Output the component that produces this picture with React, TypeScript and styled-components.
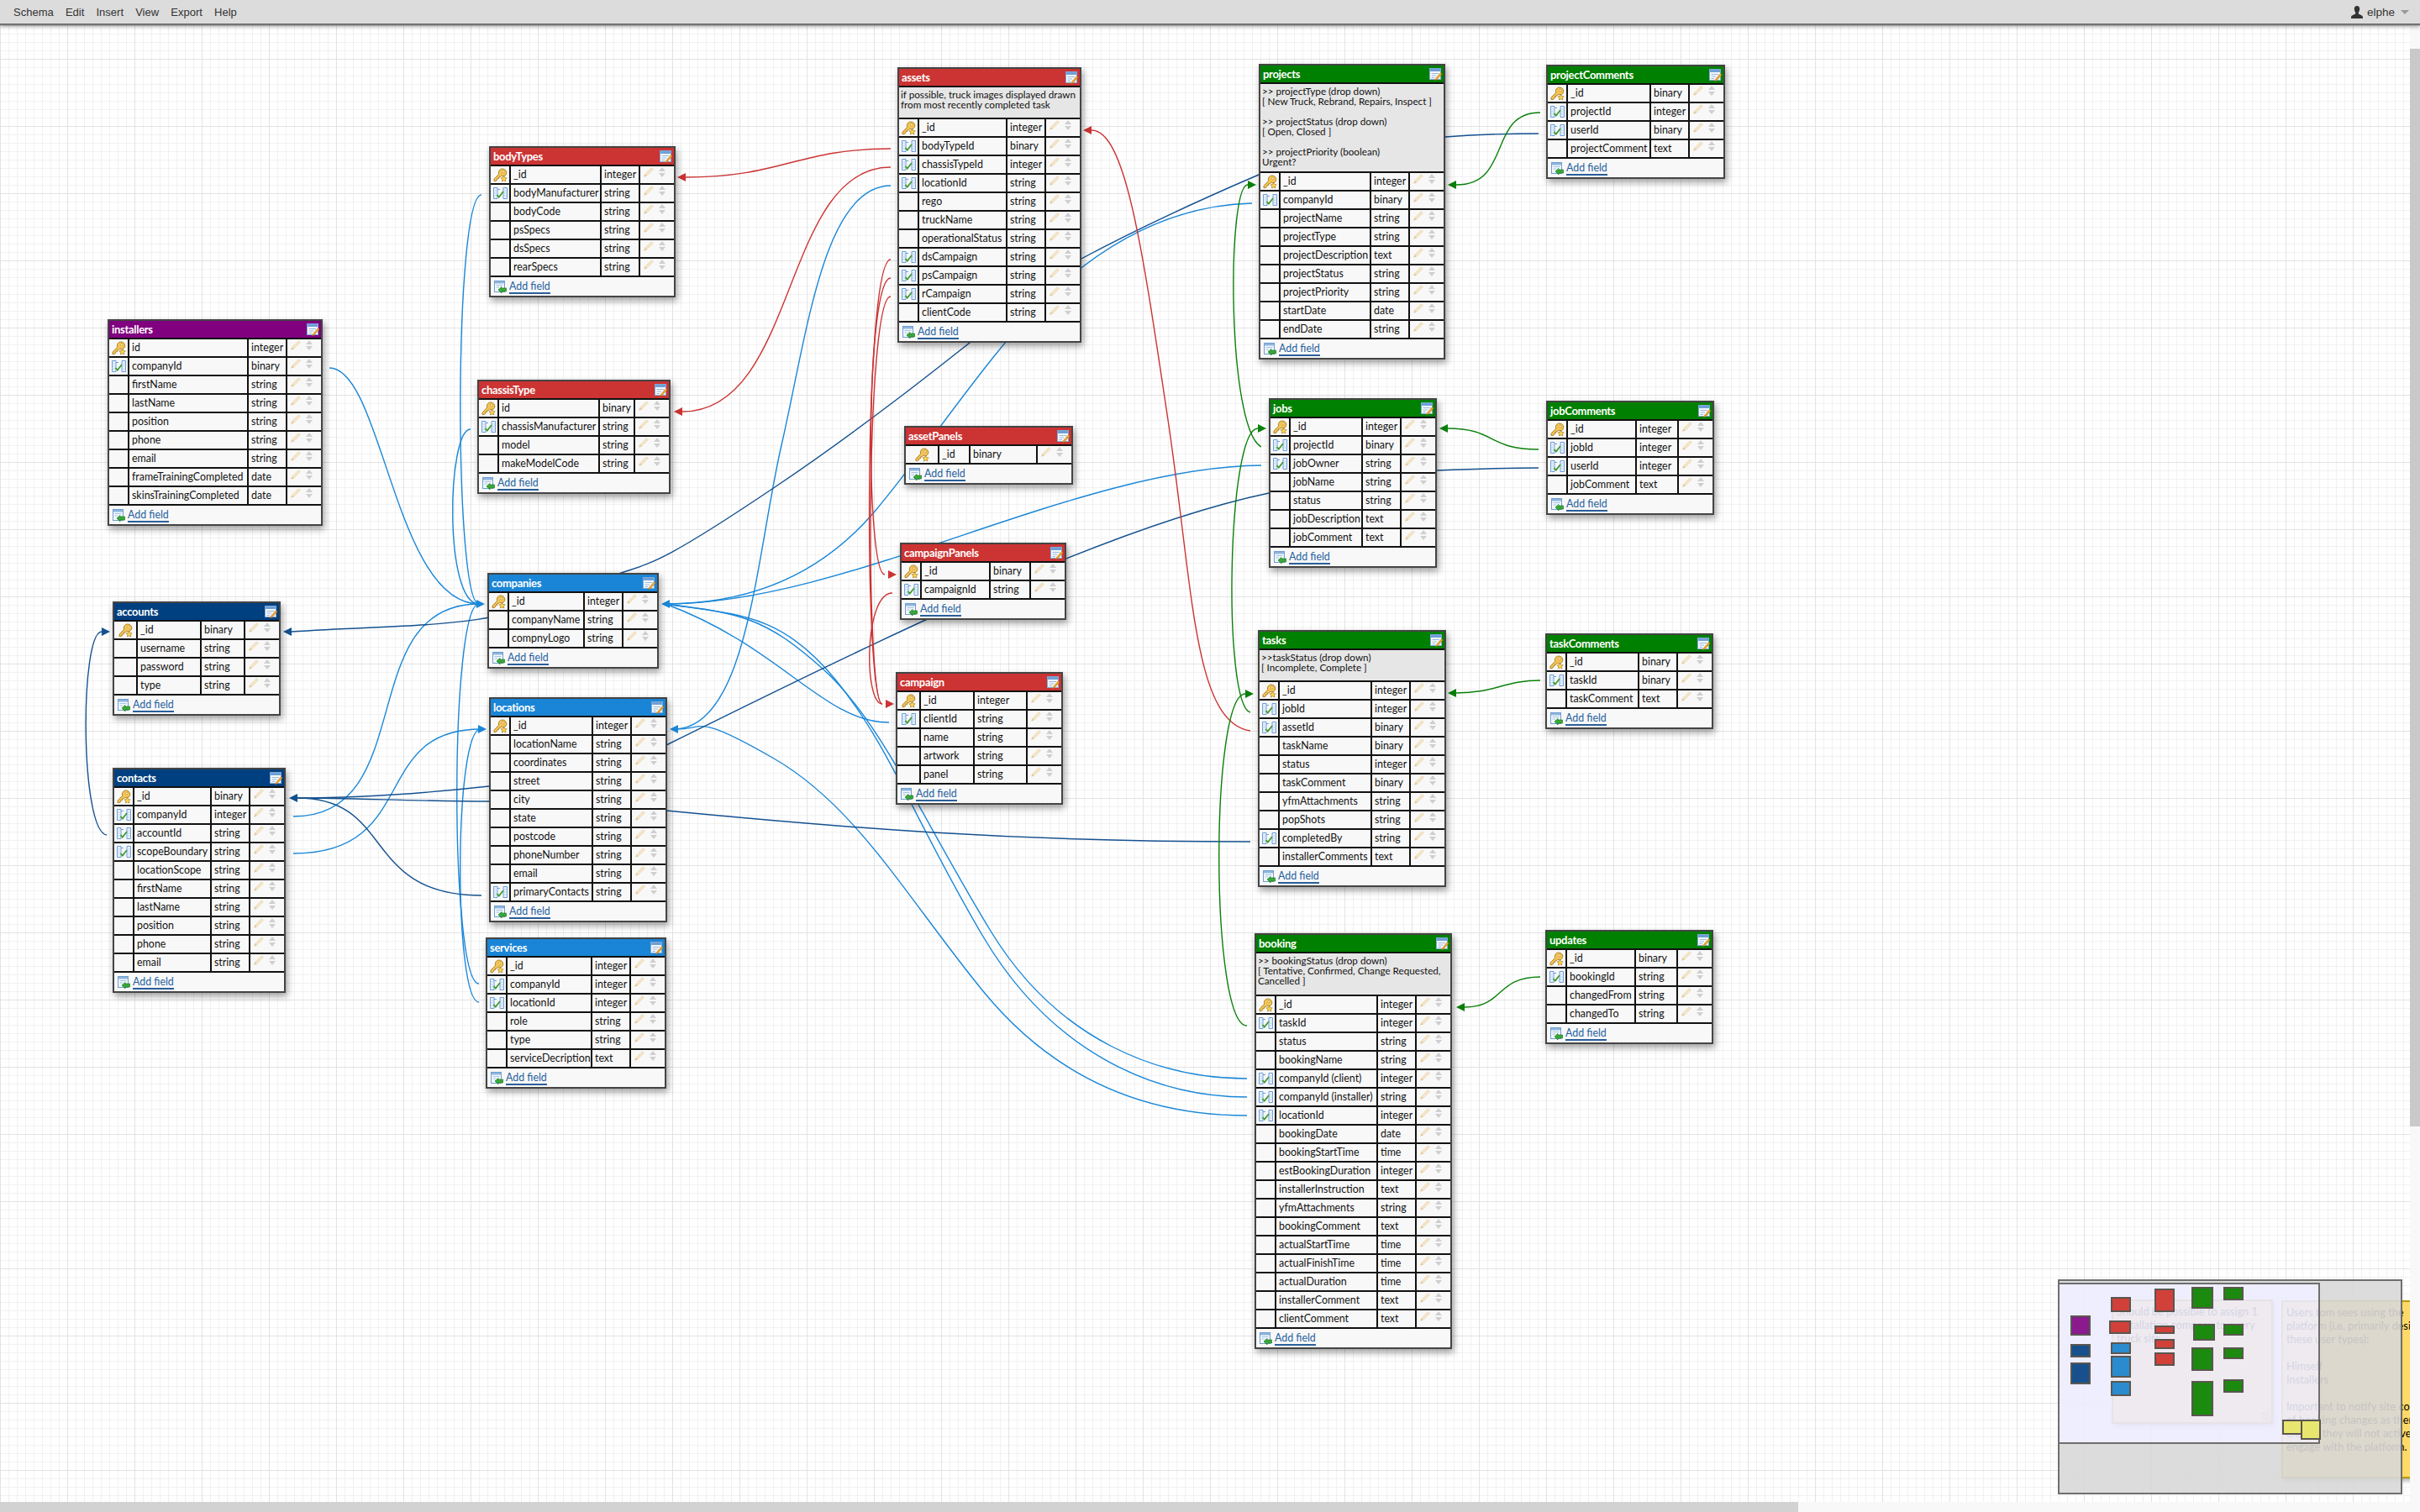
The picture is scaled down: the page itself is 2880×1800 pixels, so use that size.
import React from "react";
import styled, { createGlobalStyle } from "styled-components";

const BAR = 28;
const BLUE = "#1a87d8";
const NAVY = "#15518f";
const RED = "#cc3333";
const GREEN = "#0a800a";

const GlobalStyle = createGlobalStyle`
  html, body {
    margin: 0;
    padding: 0;
    overflow: hidden;
    background: #fff;
  }
`;

const Page = styled.div`
  width: 2880px;
  height: 1800px;
  display: flex;
  flex-direction: column;
`;

const TopBar = styled.div`
  height: ${BAR}px;
  flex: none;
  display: flex;
  align-items: center;
  padding: 0 13px 0 16px;
  background: #dcdcdc;
  box-shadow: 0 1px 0 #6a6a6a, 0 2px 1px #777, 0 3px 5px rgba(0, 0, 0, 0.45);
  font-family: "Liberation Sans", Arial, sans-serif;
  font-size: 13px;
  color: #333;
  position: relative;
  z-index: 5;
`;

const Menu = styled.div`
  display: flex;
  gap: 14.2px;
  flex: 1;
`;

const UserBox = styled.div`
  display: flex;
  align-items: center;
  gap: 5px;
  font-size: 13.5px;
`;

const Caret = styled.span`
  width: 0;
  height: 0;
  margin-left: 2px;
  border-left: 5.5px solid transparent;
  border-right: 5.5px solid transparent;
  border-top: 5px solid #999;
`;

const Middle = styled.div`
  flex: 1;
  display: flex;
  min-height: 0;
`;

const Canvas = styled.div`
  position: relative;
  flex: 1;
  overflow: hidden;
  background-color: #fff;
  background-image:
    linear-gradient(to right, #e3e3e3 1px, transparent 1px),
    linear-gradient(to bottom, #e3e3e3 1px, transparent 1px),
    linear-gradient(to right, #f1f1f1 1px, transparent 1px),
    linear-gradient(to bottom, #f1f1f1 1px, transparent 1px);
  background-size: 80px 80px, 80px 80px, 10px 10px, 10px 10px;
  background-position: 0 0, 0 42px, 0 0, 0 2px;
`;

const Wires = styled.svg`
  position: absolute;
  left: 0;
  top: 0;
`;

const VTrack = styled.div`
  width: 12px;
  flex: none;
  background: #f8f8f8;
  padding-top: 30px;
  box-sizing: border-box;
`;

const VThumb = styled.div`
  height: 1283px;
  background: #c9c9c9;
`;

const HTrack = styled.div`
  height: 12px;
  flex: none;
  background: #f8f8f8;
`;

const HThumb = styled.div`
  width: 2140px;
  height: 12px;
  background: #d2d2d2;
`;

const TableBox = styled.div<{ $x: number; $y: number; $w: number }>`
  position: absolute;
  left: ${(p) => p.$x}px;
  top: ${(p) => p.$y - BAR}px;
  width: ${(p) => p.$w}px;
  box-sizing: border-box;
  border: 2px solid #444;
  background: #f8f8f8;
  box-shadow: 2px 4px 8px rgba(0, 0, 0, 0.38);
  font-family: "Lato", "Noto Sans", sans-serif;
  font-size: 12.4px;
  color: #111;
  z-index: 2;
`;

const TableHead = styled.div<{ $color: string }>`
  height: 20px;
  display: flex;
  align-items: center;
  justify-content: space-between;
  padding: 0 2px 0 3px;
  background: ${(p) => p.$color};
  color: #fff;
  font-weight: 700;
  font-size: 13px;
  letter-spacing: -0.3px;
`;

const TableNote = styled.div<{ $h: number }>`
  height: ${(p) => p.$h}px;
  box-sizing: border-box;
  border-top: 2px solid #111;
  padding: 2px 2px 0;
  background: #e6e6e6;
  font-size: 11.7px;
  line-height: 12px;
  white-space: pre-wrap;
`;

const Field = styled.div<{ $cols: string }>`
  display: grid;
  grid-template-columns: ${(p) => p.$cols};
  height: 22px;
  box-sizing: border-box;
  border-top: 2px solid #111;
  line-height: 20px;
`;

const KeyCell = styled.div`
  display: flex;
  align-items: center;
  justify-content: center;
`;

const TextCell = styled.div`
  border-left: 2px solid #111;
  padding-left: 3px;
  white-space: nowrap;
`;

const ActionCell = styled.div`
  border-left: 2px solid #111;
  display: flex;
  align-items: flex-start;
  gap: 6px;
  padding: 1px 0 0 4px;
`;

const FieldFoot = styled.div`
  height: 24px;
  box-sizing: border-box;
  border-top: 2px solid #111;
  display: flex;
  align-items: center;
  gap: 3px;
  padding-left: 4px;
`;

const AddLink = styled.a`
  color: #24609f;
  border-bottom: 2px solid #2a5f9a;
  line-height: 15px;
  margin-top: 1px;
`;

const StickyNote = styled.div<{ $x: number; $y: number; $w: number; $h: number }>`
  position: absolute;
  left: ${(p) => p.$x}px;
  top: ${(p) => p.$y - BAR}px;
  width: ${(p) => p.$w}px;
  height: ${(p) => p.$h}px;
  box-sizing: border-box;
  border: 2px solid #b79a10;
  background: #ffd966;
  padding: 4px;
  font-family: "Lato", "Noto Sans", sans-serif;
  font-size: 12.8px;
  line-height: 16px;
  color: #000;
  white-space: pre;
  overflow: hidden;
  box-shadow: 2px 3px 5px rgba(0, 0, 0, 0.3);
  z-index: 1;
  &::after {
    content: "";
    position: absolute;
    right: 1px;
    bottom: 1px;
    width: 11px;
    height: 11px;
    background: repeating-linear-gradient(135deg, transparent 0 2px, #9a8a30 2px 3px);
  }
`;

const MiniMap = styled.div`
  position: absolute;
  left: 2449px;
  top: ${1523 - BAR}px;
  width: 410px;
  height: 256px;
  box-sizing: border-box;
  border: 2px solid #6e6e6e;
  z-index: 3;
  background:
    linear-gradient(rgba(216, 216, 216, 0.9), rgba(216, 216, 216, 0.9)) right top / 98px 100% no-repeat,
    linear-gradient(rgba(216, 216, 216, 0.9), rgba(216, 216, 216, 0.9)) left bottom / 308px 60px no-repeat,
    linear-gradient(rgba(216, 216, 216, 0.9), rgba(216, 216, 216, 0.9)) left top / 308px 2px no-repeat;
`;

const MiniView = styled.div`
  position: absolute;
  left: -2px;
  top: 2px;
  width: 312px;
  height: 192px;
  box-sizing: border-box;
  border: 2px solid #6e6e6e;
  background: rgba(236, 236, 255, 0.895);
`;

const MiniTable = styled.div<{ $x: number; $y: number; $w: number; $h: number; $c: string }>`
  position: absolute;
  left: ${(p) => (p.$x - 2451 * 3 + 2420 * 3) / 3}px;
  top: ${(p) => (p.$y - 1525 * 3 + 1500 * 3) / 3}px;
  width: ${(p) => p.$w / 3}px;
  height: ${(p) => p.$h / 3}px;
  box-sizing: border-box;
  border: 2px solid #5a5650;
  background: ${(p) => p.$c};
`;

function KeyIcon() {
  return (
    <svg width="17" height="17" viewBox="0 0 17 17">
      <path
        d="M10.8 1C13.6 1 15.8 3.1 15.8 5.6C15.8 8.2 13.6 10 11.3 9.8L9.6 9.3L8.2 10.8L6.6 10.9L6.5 12.5L4.9 12.7L4.6 14.4L3 15.6H1V13.2L6.6 7.3C5.6 3.8 7.8 1 10.8 1Z"
        fill="#f1c455"
        stroke="#a8791e"
        strokeWidth="0.9"
      />
      <circle cx="11.8" cy="4.6" r="1.3" fill="#fff3c4" stroke="#b98a2a" strokeWidth="0.6" />
      <path
        d="M12.6 9.4L13.7 11.6L16.2 11.9L14.4 13.6L14.9 16L12.6 14.8L10.4 16L10.9 13.6L9 11.9L11.5 11.6Z"
        fill="#ffd84f"
        stroke="#a8791e"
        strokeWidth="0.7"
      />
    </svg>
  );
}

function ForeignIcon() {
  return (
    <svg width="17" height="16" viewBox="0 0 17 16">
      <path d="M0.5 1.5H5V14.5H0.5Z M12 1.5H16.5V14.5H12Z" fill="#eaf2fb" stroke="#6a9edb" strokeWidth="1" />
      <path d="M0.5 5H5M0.5 8H5M0.5 11H5M12 5H16.5M12 8H16.5M12 11H16.5" stroke="#b4cdea" strokeWidth="0.8" />
      <path d="M5 3.5H8" stroke="#6a9edb" strokeWidth="1" />
      <path d="M4.5 10L6.8 12.6L12 6" fill="none" stroke="#3c9a2c" strokeWidth="1.7" />
    </svg>
  );
}

function EditIcon() {
  return (
    <svg width="15" height="15" viewBox="0 0 15 15">
      <rect x="0.5" y="0.5" width="13" height="13" fill="#f4f8fd" stroke="#7ea9d8" />
      <rect x="1" y="1" width="12" height="3" fill="#6f9fd6" />
      <path d="M2.5 6.5H11M2.5 9H8M2.5 11.5H6" stroke="#9bb8dc" />
      <path d="M13.5 5.5L7.5 12.5L6.5 14.5L9 13.8L15 7Z" fill="#f0a830" stroke="#b8761a" strokeWidth="0.6" />
    </svg>
  );
}

function AddFieldIcon() {
  return (
    <svg width="15" height="15" viewBox="0 0 15 15">
      <rect x="0.5" y="0.5" width="12" height="13" fill="#f2f7fc" stroke="#6f9fd0" />
      <rect x="1" y="1" width="11" height="2.5" fill="#8fb5de" />
      <path d="M2.5 5.5H10.5M2.5 8H6" stroke="#a6c2e2" />
      <path d="M14.5 9V13H9V15L5 11L9 7.5V9Z" fill="#38a83a" stroke="#1f7d25" strokeWidth="0.7" />
    </svg>
  );
}

function PencilIcon() {
  return (
    <svg width="12" height="12" viewBox="0 0 12 12">
      <path d="M9.4 0.8L11.2 2.6L3.6 10.2L0.7 11.2L1.7 8.4Z" fill="#f6e8cc" stroke="#e8d0a6" strokeWidth="0.8" />
      <path d="M0.7 11.2L1.7 8.4L3.6 10.2Z" fill="#e0c498" />
    </svg>
  );
}

function StepIcon() {
  return (
    <svg width="8" height="12" viewBox="0 0 8 12">
      <path d="M4 0L8 5H0ZM0 7H8L4 12Z" fill="#cfcfcf" />
    </svg>
  );
}

type TableDef = {
  name: string;
  color: string;
  x: number;
  y: number;
  w: number;
  cols: [number, number, number];
  rows: string;
  note?: string;
  noteH?: number;
};

const PURPLE = "#800080";
const DEEP = "#004080";
const SKY = "#1a85d6";

// rows: "*" primary key, "+" foreign key, name:type separated by |
const tables: TableDef[] = [
  { name: "installers", color: PURPLE, x: 128, y: 380, w: 256, cols: [22, 140, 44],
    rows: "*id:integer|+companyId:binary|firstName:string|lastName:string|position:string|phone:string|email:string|frameTrainingCompleted:date|skinsTrainingCompleted:date" },
  { name: "accounts", color: DEEP, x: 134, y: 716, w: 200, cols: [26, 74, 50],
    rows: "*_id:binary|username:string|password:string|type:string" },
  { name: "contacts", color: DEEP, x: 134, y: 914, w: 206, cols: [22, 90, 44],
    rows: "*_id:binary|+companyId:integer|+accountId:string|+scopeBoundary:string|locationScope:string|firstName:string|lastName:string|position:string|phone:string|email:string" },
  { name: "bodyTypes", color: RED, x: 582, y: 174, w: 222, cols: [22, 106, 44],
    rows: "*_id:integer|+bodyManufacturer:string|bodyCode:string|psSpecs:string|dsSpecs:string|rearSpecs:string" },
  { name: "chassisType", color: RED, x: 568, y: 452, w: 230, cols: [22, 118, 40],
    rows: "*id:binary|+chassisManufacturer:string|model:string|makeModelCode:string" },
  { name: "companies", color: SKY, x: 580, y: 682, w: 204, cols: [22, 88, 44],
    rows: "*_id:integer|companyName:string|compnyLogo:string" },
  { name: "locations", color: SKY, x: 582, y: 830, w: 212, cols: [22, 96, 44],
    rows: "*_id:integer|locationName:string|coordinates:string|street:string|city:string|state:string|postcode:string|phoneNumber:string|email:string|+primaryContacts:string" },
  { name: "services", color: SKY, x: 578, y: 1116, w: 215, cols: [22, 99, 44],
    rows: "*_id:integer|+companyId:integer|+locationId:integer|role:string|type:string|serviceDecription:text" },
  { name: "assets", color: RED, x: 1068, y: 80, w: 219, cols: [22, 103, 44], noteH: 38,
    note: "if possible, truck images displayed drawn\nfrom most recently completed task",
    rows: "*_id:integer|+bodyTypeId:binary|+chassisTypeId:integer|+locationId:string|rego:string|truckName:string|operationalStatus:string|+dsCampaign:string|+psCampaign:string|+rCampaign:string|clientCode:string" },
  { name: "assetPanels", color: RED, x: 1076, y: 507, w: 201, cols: [38, 35, 78],
    rows: "*_id:binary" },
  { name: "campaignPanels", color: RED, x: 1071, y: 646, w: 198, cols: [22, 80, 46],
    rows: "*_id:binary|+campaignId:string" },
  { name: "campaign", color: RED, x: 1066, y: 800, w: 199, cols: [26, 62, 61],
    rows: "*_id:integer|+clientId:string|name:string|artwork:string|panel:string" },
  { name: "projects", color: "#008000", x: 1498, y: 76, w: 222, cols: [22, 106, 44], noteH: 106,
    note: ">> projectType (drop down)\n[ New Truck, Rebrand, Repairs, Inspect ]\n\n>> projectStatus (drop down)\n[ Open, Closed ]\n\n>> projectPriority (boolean)\nUrgent?",
    rows: "*_id:integer|+companyId:binary|projectName:string|projectType:string|projectDescription:text|projectStatus:string|projectPriority:string|startDate:date|endDate:string" },
  { name: "projectComments", color: "#008000", x: 1840, y: 77, w: 213, cols: [22, 97, 44],
    rows: "*_id:binary|+projectId:integer|+userId:binary|projectComment:text" },
  { name: "jobs", color: "#008000", x: 1510, y: 474, w: 200, cols: [22, 84, 44],
    rows: "*_id:integer|+projectId:binary|+jobOwner:string|jobName:string|status:string|jobDescription:text|jobComment:text" },
  { name: "jobComments", color: "#008000", x: 1840, y: 477, w: 200, cols: [22, 80, 48],
    rows: "*_id:integer|+jobId:integer|+userId:integer|jobComment:text" },
  { name: "tasks", color: "#008000", x: 1497, y: 750, w: 224, cols: [22, 108, 44], noteH: 38,
    note: ">>taskStatus (drop down)\n[ Incomplete, Complete ]",
    rows: "*_id:integer|+jobId:integer|+assetId:binary|taskName:binary|status:integer|taskComment:binary|yfmAttachments:string|popShots:string|+completedBy:string|installerComments:text" },
  { name: "taskComments", color: "#008000", x: 1839, y: 754, w: 200, cols: [22, 84, 44],
    rows: "*_id:binary|+taskId:binary|taskComment:text" },
  { name: "booking", color: "#008000", x: 1493, y: 1111, w: 235, cols: [22, 119, 44], noteH: 51,
    note: ">> bookingStatus (drop down)\n[ Tentative, Confirmed, Change Requested,\nCancelled ]",
    rows: "*_id:integer|+taskId:integer|status:string|bookingName:string|+companyId (client):integer|+companyId (installer):string|+locationId:integer|bookingDate:date|bookingStartTime:time|estBookingDuration:integer|installerInstruction:text|yfmAttachments:string|bookingComment:text|actualStartTime:time|actualFinishTime:time|actualDuration:time|installerComment:text|clientComment:text" },
  { name: "updates", color: "#008000", x: 1839, y: 1107, w: 200, cols: [22, 80, 48],
    rows: "*_id:binary|+bookingId:string|changedFrom:string|changedTo:string" },
];

const wires: [string, string][] = [
  // into companies, left
  [BLUE, "M392 438C455 438 470 719 570 719"],
  [BLUE, "M573 232C540 232 540 719 570 719"],
  [BLUE, "M560 511C532 511 528 719 570 719"],
  [BLUE, "M349 972C500 972 420 719 570 719"],
  [BLUE, "M570 1171C535 1171 535 719 570 719"],
  // into locations, left
  [BLUE, "M349 1016C500 1016 440 868 572 868"],
  [BLUE, "M570 1193C540 1193 540 868 572 868"],
  // into companies, right
  [BLUE, "M1490 242C1400 244 1320 285 1250 350S1100 540 1040 610S900 719 792 719"],
  [BLUE, "M1501 554C1280 556 1010 719 792 719"],
  [BLUE, "M1058 860C980 860 930 770 792 719"],
  [BLUE, "M1484 1284C1380 1284 1260 1240 1180 1110S1050 860 980 797S880 730 792 719"],
  [BLUE, "M1484 1306C1370 1306 1250 1250 1170 1115S1060 890 995 810S880 732 792 719"],
  // into locations, right
  [BLUE, "M1484 1328C1370 1328 1260 1290 1170 1180S1020 960 921 903S840 870 802 868"],
  [BLUE, "M1060 221C980 221 960 400 930 530S890 868 802 868"],
  // navy
  [NAVY, "M1498 208C1400 250 1330 285 1285 309S1100 460 922 580S780 660 680 705S500 742 347 752"],
  [NAVY, "M582 936C500 945 420 950 354 950"],
  [NAVY, "M582 954C500 954 420 950 354 950"],
  [NAVY, "M573 1066C430 1066 470 950 354 950"],
  [NAVY, "M127 994C95 990 95 752 121 752"],
  [NAVY, "M1510 587C1330 625 1100 735 793 887"],
  [NAVY, "M793 965C1000 985 1200 1002 1488 1002"],
  [NAVY, "M1720 163C1760 160 1790 159 1831 159"],
  [NAVY, "M1710 560C1760 558 1790 557 1831 557"],
  // red
  [RED, "M1060 177C950 177 930 211 816 211"],
  [RED, "M1060 199C930 199 950 490 812 490"],
  [RED, "M1060 309C1028 309 1028 838 1050 838"],
  [RED, "M1060 331C1030 331 1030 684 1053 684"],
  [RED, "M1060 353C1030 353 1030 838 1050 838"],
  [RED, "M1062 706C1028 706 1028 838 1050 838"],
  [RED, "M1488 870C1420 860 1420 700 1390 500S1340 155 1299 155"],
  // green
  [GREEN, "M1501 532C1460 510 1460 220 1485 220"],
  [GREEN, "M1488 848C1455 840 1460 510 1497 510"],
  [GREEN, "M1484 1221C1440 1221 1440 826 1482 826"],
  [GREEN, "M1833 134C1770 134 1800 220 1733 220"],
  [GREEN, "M1831 535C1770 535 1780 510 1723 510"],
  [GREEN, "M1833 810C1790 810 1780 825 1733 825"],
  [GREEN, "M1833 1163C1780 1163 1790 1199 1743 1199"],
];

// tip x, tip y, points right?, colour
const arrows: [number, number, boolean, string][] = [
  [577, 719, true, BLUE],
  [787, 719, false, BLUE],
  [579, 868, true, BLUE],
  [797, 868, false, BLUE],
  [131, 752, true, NAVY],
  [337, 752, false, NAVY],
  [344, 950, false, NAVY],
  [806, 211, false, RED],
  [802, 490, false, RED],
  [1289, 155, false, RED],
  [1067, 684, true, RED],
  [1064, 838, true, RED],
  [1495, 220, true, GREEN],
  [1723, 220, false, GREEN],
  [1507, 510, true, GREEN],
  [1713, 510, false, GREEN],
  [1492, 826, true, GREEN],
  [1723, 825, false, GREEN],
  [1733, 1199, false, GREEN],
];

const miniRed = "#d2403a";
const miniGreen = "#1b8a0e";
const miniBlue = "#2a8ccf";
const miniNavy = "#17508c";

// zoomed crop coordinates (3x from 2420,1500)
const miniTables: [number, number, number, number, string][] = [
  [132, 198, 72, 72, "#8a1a8e"],
  [132, 300, 72, 48, miniNavy],
  [132, 366, 72, 78, miniNavy],
  [276, 132, 72, 54, miniRed],
  [270, 216, 78, 48, miniRed],
  [276, 294, 72, 42, miniBlue],
  [276, 342, 72, 78, miniBlue],
  [276, 432, 72, 54, miniBlue],
  [432, 102, 72, 84, miniRed],
  [432, 234, 72, 30, miniRed],
  [432, 282, 72, 36, miniRed],
  [432, 330, 72, 48, miniRed],
  [564, 96, 78, 78, miniGreen],
  [678, 96, 72, 48, miniGreen],
  [570, 228, 78, 60, miniGreen],
  [678, 228, 72, 42, miniGreen],
  [564, 312, 78, 84, miniGreen],
  [678, 312, 72, 42, miniGreen],
  [564, 432, 78, 126, miniGreen],
  [678, 426, 72, 48, miniGreen],
  [888, 570, 72, 54, "#e8e66e"],
  [954, 570, 72, 72, "#e8e66e"],
];

function SchemaTable({ def }: { def: TableDef }) {
  const [icon, name, type] = def.cols;
  const cols = `${icon}px ${name + 2}px ${type + 2}px 1fr`;
  return (
    <TableBox $x={def.x} $y={def.y} $w={def.w}>
      <TableHead $color={def.color}>
        <span>{def.name}</span>
        <EditIcon />
      </TableHead>
      {def.note && <TableNote $h={def.noteH ?? 38}>{def.note}</TableNote>}
      {def.rows.split("|").map((row) => {
        const flag = row[0];
        const [fieldName, fieldType] = row.replace(/^[*+]/, "").split(":");
        return (
          <Field key={row} $cols={cols}>
            <KeyCell>
              {flag === "*" && <KeyIcon />}
              {flag === "+" && <ForeignIcon />}
            </KeyCell>
            <TextCell>{fieldName}</TextCell>
            <TextCell>{fieldType}</TextCell>
            <ActionCell>
              <PencilIcon />
              <StepIcon />
            </ActionCell>
          </Field>
        );
      })}
      <FieldFoot>
        <AddFieldIcon />
        <AddLink>Add field</AddLink>
      </FieldFoot>
    </TableBox>
  );
}

export default function App() {
  return (
    <Page>
      <GlobalStyle />
      <TopBar>
        <Menu>
          <span>Schema</span>
          <span>Edit</span>
          <span>Insert</span>
          <span>View</span>
          <span>Export</span>
          <span>Help</span>
        </Menu>
        <UserBox>
          <svg width="14" height="15" viewBox="0 0 14 15">
            <path
              d="M7 0C9.2 0 10.2 1.6 10.2 3.6C10.2 5.6 9.4 7 8.8 7.8V9.2C8.8 10.2 14 10.6 14 13.4V15H0V13.4C0 10.6 5.2 10.2 5.2 9.2V7.8C4.6 7 3.8 5.6 3.8 3.6C3.8 1.6 4.8 0 7 0Z"
              fill="#333"
            />
          </svg>
          <span>elphe</span>
          <Caret />
        </UserBox>
      </TopBar>
      <Middle>
        <Canvas>
          <Wires width="2868" height="1760" viewBox={`0 ${BAR} 2868 1760`} fill="none">
            {wires.map(([color, d]) => (
              <path key={d} d={d} stroke={color} strokeWidth="1.4" />
            ))}
            {arrows.map(([x, y, right, color]) => {
              const base = right ? x - 10 : x + 10;
              return (
                <polygon
                  key={`${x}-${y}`}
                  points={`${x},${y} ${base},${y - 5} ${base},${y + 5}`}
                  fill={color}
                />
              );
            })}
          </Wires>
          {tables.map((def) => (
            <SchemaTable key={def.name} def={def} />
          ))}
          <StickyNote $x={2513} $y={1547} $w={192} $h={148}>
            {"Should be possible to assign 1\ninstallation company to every\ntruck site."}
          </StickyNote>
          <StickyNote $x={2715} $y={1548} $w={260} $h={212}>
            {"Users tom sees using the\nplatform (i.e. primarily designed for\nthese user types):\n\nHimself\nInstallers\n\nImportant to notify site contacts\nof booking changes as there is a\nchance they will not actively\nengage with the platform."}
          </StickyNote>
          <MiniMap>
            <MiniView />
            {miniTables.map(([x, y, w, h, c]) => (
              <MiniTable key={`${x}-${y}`} $x={x} $y={y} $w={w} $h={h} $c={c} />
            ))}
          </MiniMap>
        </Canvas>
        <VTrack>
          <VThumb />
        </VTrack>
      </Middle>
      <HTrack>
        <HThumb />
      </HTrack>
    </Page>
  );
}
